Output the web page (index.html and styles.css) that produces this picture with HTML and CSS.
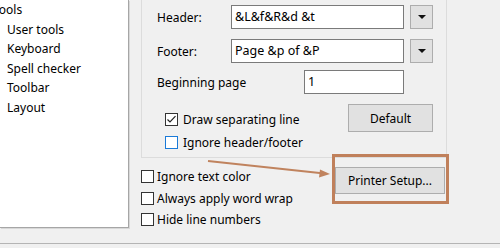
FILE: index.html
```html
<!DOCTYPE html>
<html>
<head>
<meta charset="utf-8">
<link rel="stylesheet" href="styles.css">
</head>
<body>
<div class="main">
  <div class="tree">
    <div class="tree-inner">
      <div class="node">Tools</div>
      <div class="node child">User tools</div>
      <div class="node child">Keyboard</div>
      <div class="node child">Spell checker</div>
      <div class="node child">Toolbar</div>
      <div class="node child">Layout</div>
    </div>
  </div>
  <div class="pane">
    <div class="group">
      <div class="row">
        <span class="label">Header:</span>
        <div class="input wide">&amp;L&amp;f&amp;R&amp;d &amp;t</div>
        <div class="drop"><span class="tri"></span></div>
      </div>
      <div class="row r2">
        <span class="label">Footer:</span>
        <div class="input wide">Page &amp;p of &amp;P</div>
        <div class="drop"><span class="tri"></span></div>
      </div>
      <div class="row r3">
        <span class="label grow">Beginning page</span>
        <div class="input short">1</div>
      </div>
      <div class="bottom">
        <div class="checks inner">
          <label class="check"><span class="box checked"><svg viewBox="0 0 13 13" width="13" height="13"><path d="M2.5 6.5 L5 9 L10.5 3.2" fill="none" stroke="#222" stroke-width="1.2"/></svg></span>Draw separating line</label>
          <label class="check"><span class="box focus"></span>Ignore header/footer</label>
        </div>
        <div class="btn default">Default</div>
      </div>
    </div>
    <div class="lower">
      <div class="checks outer">
        <label class="check"><span class="box"></span>Ignore text color</label>
        <label class="check"><span class="box"></span>Always apply word wrap</label>
        <label class="check"><span class="box"></span>Hide line numbers</label>
      </div>
      <div class="btn printer">Printer Setup...</div>
    </div>
  </div>
</div>
<div class="footer"></div>
<svg class="annot" width="500" height="248" viewBox="0 0 500 248">
  <line x1="208" y1="161" x2="322" y2="173.2" stroke="#c0835e" stroke-width="2"/>
  <polygon points="330,174 320,169.5 319,177.5" fill="#c0835e"/>
  <rect x="333.5" y="155.5" width="114" height="47" fill="none" stroke="#c0805b" stroke-width="3"/>
</svg>
</body>
</html>
```
FILE: styles.css
```css
html, body {
  margin: 0;
  padding: 0;
}
body {
  width: 500px;
  height: 248px;
  overflow: hidden;
  background: #f0f0f0;
  font-family: "Noto Sans", "Open Sans", sans-serif;
  font-size: 12px;
  color: #000;
  position: relative;
}
.main {
  display: flex;
  height: 243px;
}
.tree {
  width: 128px;
  height: 227px;
  background: #fff;
  border-right: 1px solid #a6a6a6;
  border-bottom: 1px solid #a6a6a6;
  box-shadow: 1px 1px 0 #d8d8d8;
  overflow: hidden;
  flex: none;
}
.tree-inner {
  margin-left: -7px;
}
.node {
  height: 19.6px;
  line-height: 19.6px;
  white-space: nowrap;
}
.node.child {
  padding-left: 14px;
}
.pane {
  margin-left: 12px;
  width: 306px;
  display: flex;
  flex-direction: column;
}
.group {
  border: 1px solid #dcdcdc;
  border-top: none;
  height: 158px;
  box-sizing: border-box;
  padding: 5px 13px 0 15px;
  display: flex;
  flex-direction: column;
}
.row {
  display: flex;
  align-items: center;
  height: 24px;
}
.r2 { margin-top: 10px; }
.r3 { margin-top: 7px; }
.label {
  width: 74px;
  flex: none;
}
.label.grow {
  flex: 1;
}
.input {
  height: 24px;
  box-sizing: border-box;
  border: 1px solid #7a7a7a;
  background: #fff;
  padding: 0 3px;
  line-height: 22px;
  font-size: 12.5px;
  white-space: nowrap;
}
.input.wide { width: 173px; }
.input.short { width: 100px; margin-right: 29px; }
.drop {
  width: 23px;
  height: 24px;
  margin-left: 6px;
  box-sizing: border-box;
  border: 1px solid #adadad;
  background: #e1e1e1;
  display: flex;
  align-items: center;
  justify-content: center;
}
.tri {
  width: 0;
  height: 0;
  border-left: 4px solid transparent;
  border-right: 4px solid transparent;
  border-top: 4px solid #111;
}
.bottom {
  display: flex;
  margin-top: 10px;
}
.checks {
  display: flex;
  flex-direction: column;
}
.checks.inner {
  padding-left: 8px;
  padding-top: 9px;
  gap: 10px;
  flex: 1;
}
.check {
  display: flex;
  align-items: center;
  height: 13px;
  white-space: nowrap;
}
.box {
  width: 13px;
  height: 13px;
  box-sizing: border-box;
  border: 1px solid #333;
  background: #fff;
  margin-right: 5px;
  flex: none;
  display: flex;
  align-items: center;
  justify-content: center;
}
.box svg {
  display: block;
  margin: -1px;
}
.box.focus {
  border-color: #1a7ad8;
}
.btn {
  box-sizing: border-box;
  border: 1px solid #adadad;
  background: #e1e1e1;
  display: flex;
  align-items: center;
  justify-content: center;
  white-space: nowrap;
}
.default {
  width: 85px;
  height: 28px;
}
.lower {
  display: flex;
  align-items: flex-start;
}
.checks.outer {
  padding-top: 12px;
  gap: 8.5px;
}
.checks.outer .box {
  margin-right: 3px;
}
.printer {
  margin-left: auto;
  margin-right: 2px;
  margin-top: 9px;
  width: 110px;
  height: 27px;
}
.footer {
  border-top: 1px solid #b4b4b4;
  height: 4px;
}
.annot {
  position: absolute;
  left: 0;
  top: 0;
  pointer-events: none;
}
```
